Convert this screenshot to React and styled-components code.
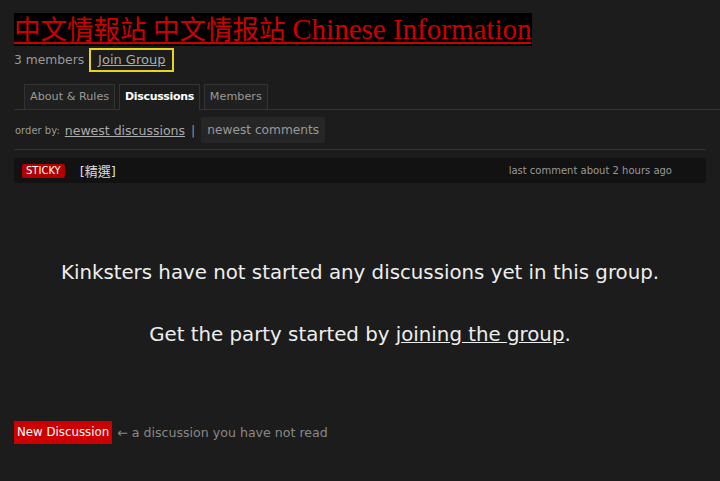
import React from "react";
import styled, { createGlobalStyle } from "styled-components";

const Global = createGlobalStyle`
  html, body {
    margin: 0;
    padding: 0;
    background: #1c1c1c;
  }
  body {
    font-family: "DejaVu Sans", "Noto Sans CJK TC", sans-serif;
    color: #999;
  }
`;

const Page = styled.div`
  padding: 13px 0 0 14px;
  height: 468px;
`;

const Title = styled.a`
  display: inline-block;
  background: #000;
  color: #cc0000;
  font-family: "Liberation Serif", "Noto Sans CJK TC", serif;
  font-size: 26.5px;
  line-height: 32px;
  text-decoration: underline;
  text-underline-offset: 3px;
  padding-right: 1px;
`;

const Latin = styled.span`
  font-size: 29px;
`;

const Meta = styled.div`
  display: flex;
  align-items: center;
  gap: 5px;
  margin-top: 2px;
  font-size: 12.3px;
  color: #999;
`;

const JoinBox = styled.a`
  display: inline-block;
  border: 2px solid #e6d51c;
  padding: 2px 7px 3px 7px;
  font-size: 13px;
  color: #aaa;
  text-decoration: underline;
`;

const TabBar = styled.div`
  display: flex;
  gap: 4px;
  margin-top: 12px;
  padding-left: 10px;
  border-bottom: 1px solid #333;
`;

const Tab = styled.div`
  padding: 0 5px;
  height: 24px;
  line-height: 24px;
  font-size: ${(p) => (p.$active ? "11px" : "11.2px")};
  letter-spacing: ${(p) => (p.$active ? "-0.35px" : "0")};
  color: ${(p) => (p.$active ? "#fff" : "#999")};
  font-weight: ${(p) => (p.$active ? "bold" : "normal")};
  background: ${(p) => (p.$active ? "#1c1c1c" : "#202020")};
  border: 1px solid #333;
  border-bottom: none;
  margin-bottom: ${(p) => (p.$active ? "-1px" : "0")};
  padding-bottom: ${(p) => (p.$active ? "1px" : "0")};
`;

const OrderRow = styled.div`
  display: flex;
  align-items: center;
  margin-right: 14px;
  padding: 7px 0 6px 1px;
  border-bottom: 1px solid #333;
  font-size: 12.5px;
`;

const OrderLabel = styled.span`
  font-size: 10px;
  color: #999;
  margin-right: 5px;
`;

const OrderLink = styled.a`
  color: #aaa;
  text-decoration: underline;
`;

const Pipe = styled.span`
  color: #999;
  margin: 0 6px 0 6px;
`;

const OrderBox = styled.span`
  background: #262626;
  color: #999;
  font-size: 12.2px;
  padding: 0 6px;
  height: 26px;
  line-height: 26px;
  border-radius: 2px;
`;

const Sticky = styled.div`
  display: flex;
  align-items: center;
  margin: 8px 14px 0 0;
  height: 25px;
  background: #121212;
  border-radius: 2px;
  padding: 0 34px 0 8px;
`;

const Badge = styled.span`
  background: #b00000;
  color: #fff;
  font-size: 10px;
  line-height: 14px;
  padding: 0 4px;
  border-radius: 2px;
`;

const TopicName = styled.span`
  margin-left: 15px;
  color: #ddd;
  font-size: 13px;
`;

const LastComment = styled.span`
  margin-left: auto;
  font-size: 10px;
  color: #999;
`;

const Empty = styled.div`
  margin: 77px 14px 0 0;
  text-align: center;
  color: #eee;
  font-size: 19.8px;
  line-height: 26px;
  p {
    margin: 0 0 36px 0;
  }
  a {
    color: #eee;
    text-decoration: underline;
  }
`;

const Legend = styled.div`
  display: flex;
  align-items: center;
  margin-top: 73px;
  font-size: 12.6px;
  color: #888;
  gap: 5px;
`;

const NewTag = styled.span`
  background: #cc0000;
  color: #fff;
  font-size: 11.8px;
  padding: 0 3px;
  height: 23px;
  line-height: 23px;
`;

export default function App() {
  return (
    <>
      <Global />
      <Page>
        <Title>
          中文情報站 中文情报站 <Latin>Chinese Information</Latin>
        </Title>
        <Meta>
          <span>3 members</span>
          <JoinBox>Join Group</JoinBox>
        </Meta>
        <TabBar>
          <Tab>About &amp; Rules</Tab>
          <Tab $active>Discussions</Tab>
          <Tab>Members</Tab>
        </TabBar>
        <OrderRow>
          <OrderLabel>order by:</OrderLabel>
          <OrderLink>newest discussions</OrderLink>
          <Pipe>|</Pipe>
          <OrderBox>newest comments</OrderBox>
        </OrderRow>
        <Sticky>
          <Badge>STICKY</Badge>
          <TopicName>[精選]</TopicName>
          <LastComment>last comment about 2 hours ago</LastComment>
        </Sticky>
        <Empty>
          <p>Kinksters have not started any discussions yet in this group.</p>
          <p>
            Get the party started by <a>joining the group</a>.
          </p>
        </Empty>
        <Legend>
          <NewTag>New Discussion</NewTag>
          <span>← a discussion you have not read</span>
        </Legend>
      </Page>
    </>
  );
}
